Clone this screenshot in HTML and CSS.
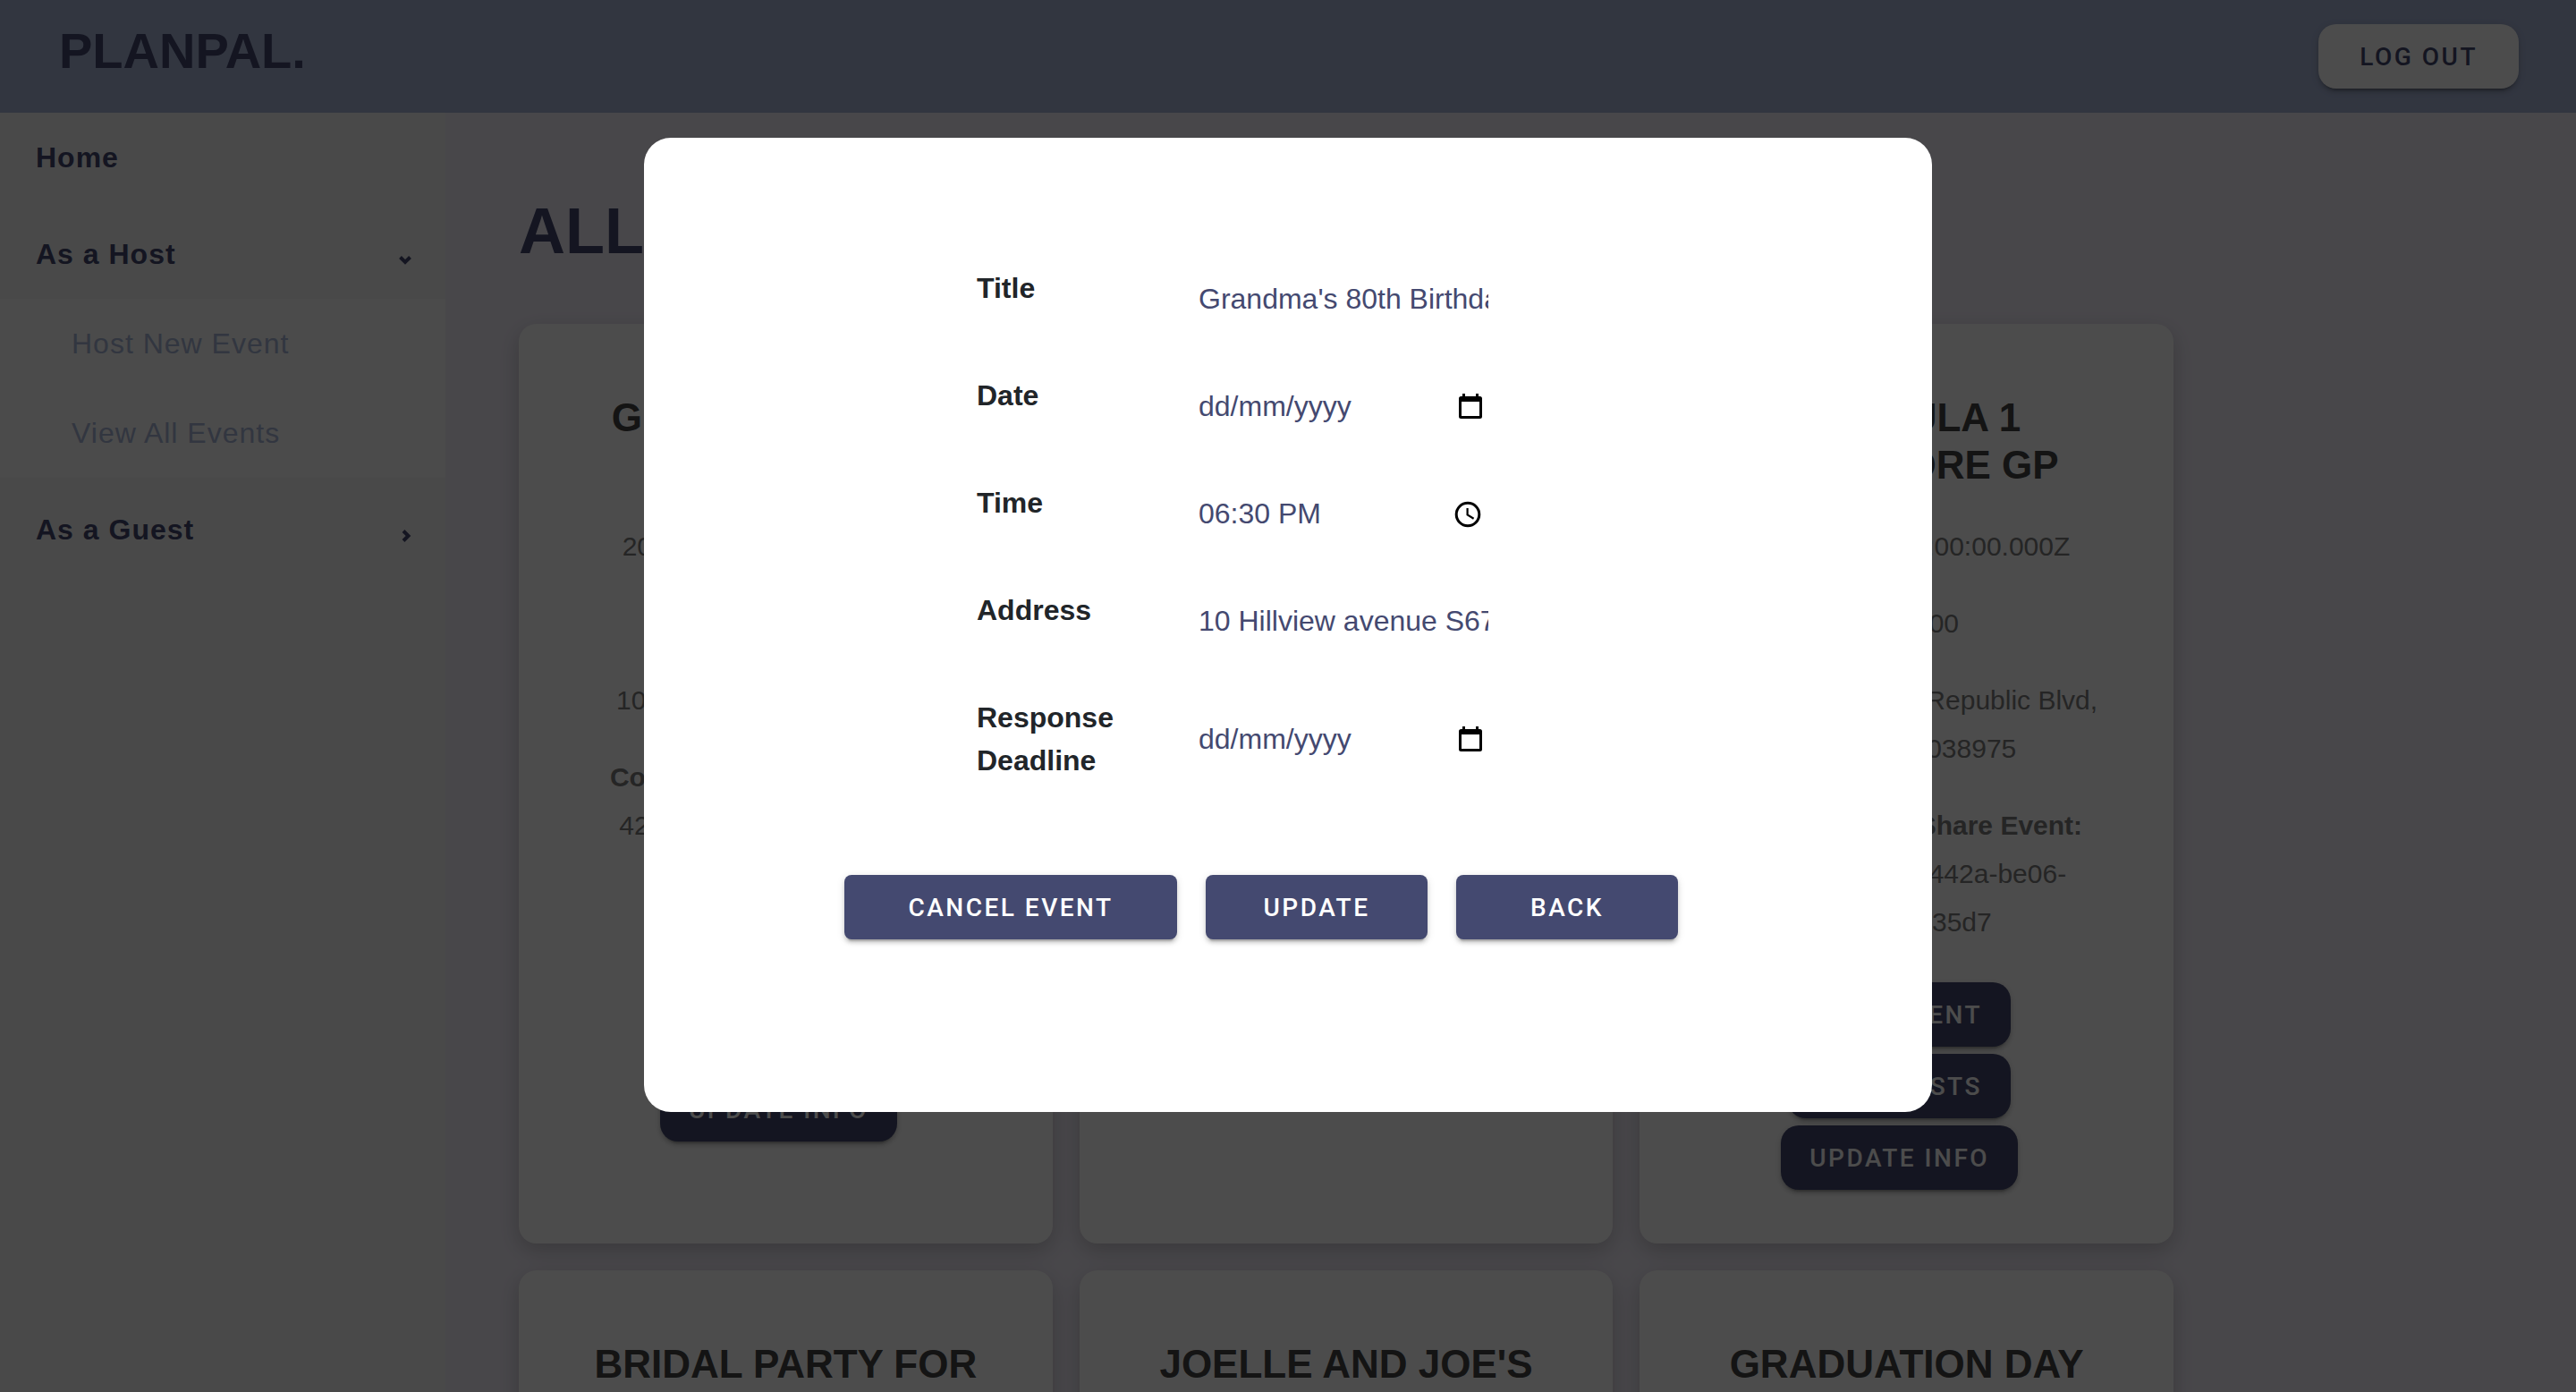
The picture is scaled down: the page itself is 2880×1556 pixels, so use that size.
FILE: index.html
```html
<!DOCTYPE html>
<html lang="en">
<head>
  <meta charset="utf-8">
  <meta name="viewport" content="width=device-width, initial-scale=1">
  <title>PlanPal</title>
  <link rel="stylesheet" href="styles.css">
</head>
<body class="modal-open">
  <header class="topbar">
    <a class="brand" href="#">PLANPAL.</a>
    <button class="btn btn-light" type="button">LOG OUT</button>
  </header>

  <div class="shell">
    <nav class="sidebar" aria-label="Main">
      <a class="nav-item" href="#">Home</a>
      <a class="nav-item" href="#">As a Host
        <svg class="chevron" viewBox="0 0 14 14" aria-hidden="true"><path d="M1.5 3.5 7 9l5.500-5.500"/></svg>
      </a>
      <div class="submenu">
        <a class="sub-item" href="#">Host New Event</a>
        <a class="sub-item" href="#">View All Events</a>
      </div>
      <a class="nav-item" href="#">As a Guest
        <svg class="chevron" viewBox="0 0 14 14" aria-hidden="true"><path d="M5 1.500 10.500 7 5 12.500"/></svg>
      </a>
    </nav>

    <main class="content">
      <h1 class="page-title">ALL EVENTS</h1>
      <div class="cards">
        <article class="card">
          <h2 class="card-title">GRANDMA'S 80TH BIRTHDAY</h2>
          <p class="card-text">2022-04-28T00:00:00.000Z</p>
          <p class="card-text">18:30:00</p>
          <p class="card-text">10 Hillview avenue S670010</p>
          <p class="card-text"><strong>Copy Code To Share Event:</strong><br>42b8a1d0-9c37-4e15-a2d6-<br>7be05c913a46</p>
          <div class="card-actions">
            <button class="btn btn-dark" type="button">VIEW EVENT</button>
            <button class="btn btn-dark" type="button">SEE GUESTS</button>
            <button class="btn btn-dark" type="button">UPDATE INFO</button>
          </div>
        </article>
        <article class="card"></article>
        <article class="card">
          <h2 class="card-title">FORMULA 1 SINGAPORE GP</h2>
          <p class="card-text">2022-10-02T00:00:00.000Z</p>
          <p class="card-text">20:00:00</p>
          <p class="card-text">F1 Pit Building, 1 Republic Blvd, Singapore 038975</p>
          <p class="card-text"><strong>Copy Code To Share Event:</strong><br>6f1d9b20-8fa3-442a-be06-<br>9c1f780e35d7</p>
          <div class="card-actions">
            <button class="btn btn-dark" type="button">VIEW EVENT</button>
            <button class="btn btn-dark" type="button">SEE GUESTS</button>
            <button class="btn btn-dark" type="button">UPDATE INFO</button>
          </div>
        </article>
        <article class="card"><h2 class="card-title">BRIDAL PARTY FOR</h2></article>
        <article class="card"><h2 class="card-title">JOELLE AND JOE'S</h2></article>
        <article class="card"><h2 class="card-title">GRADUATION DAY</h2></article>
      </div>
    </main>
  </div>

  <div class="overlay">
    <div class="modal" role="dialog" aria-modal="true" aria-label="Update event">
      <form class="event-form">
        <div class="fields">
          <div class="field">
            <label class="label" for="title">Title</label>
            <div class="control"><input class="input" id="title" type="text" value="Grandma's 80th Birthday"></div>
          </div>
          <div class="field">
            <label class="label" for="date">Date</label>
            <div class="control">
              <input class="input" id="date" type="text" placeholder="dd/mm/yyyy">
              <button class="picker" type="button" aria-label="Pick a date">
                <svg viewBox="0 0 40 40" aria-hidden="true"><path fill-rule="evenodd" d="M11 6h3v3h12V6h3v3h1.500q2.500 0 2.500 2.500v20q0 2.500-2.500 2.500h-21Q7 34 7 31.500v-20Q7 9 9.500 9H11zM10 15v16h20V15z"/></svg>
              </button>
            </div>
          </div>
          <div class="field">
            <label class="label" for="time">Time</label>
            <div class="control">
              <input class="input" id="time" type="text" value="06:30 PM">
              <button class="picker" type="button" aria-label="Pick a time">
                <svg viewBox="0 0 40 40" aria-hidden="true"><g fill="none" stroke="currentColor"><circle cx="17" cy="21" r="12.800" stroke-width="3"/><path d="M16.600 14v7.500l7 4.200" stroke-width="2.200"/></g></svg>
              </button>
            </div>
          </div>
          <div class="field">
            <label class="label" for="address">Address</label>
            <div class="control"><input class="input" id="address" type="text" value="10 Hillview avenue S670010"></div>
          </div>
          <div class="field">
            <label class="label" for="deadline">Response Deadline</label>
            <div class="control">
              <input class="input" id="deadline" type="text" placeholder="dd/mm/yyyy">
              <button class="picker" type="button" aria-label="Pick a deadline">
                <svg viewBox="0 0 40 40" aria-hidden="true"><path fill-rule="evenodd" d="M11 6h3v3h12V6h3v3h1.500q2.500 0 2.500 2.500v20q0 2.500-2.500 2.500h-21Q7 34 7 31.500v-20Q7 9 9.500 9H11zM10 15v16h20V15z"/></svg>
              </button>
            </div>
          </div>
        </div>
        <div class="form-actions">
          <button class="btn btn-primary btn-wide" type="button">CANCEL EVENT</button>
          <button class="btn btn-primary" type="submit">UPDATE</button>
          <button class="btn btn-primary" type="button">BACK</button>
        </div>
      </form>
    </div>
  </div>
</body>
</html>
```

FILE: styles.css
```css
:root {
  --ink: #444970;
  --sky: #a7b4d6;
  --sans: "Liberation Sans", Arial, sans-serif;
  --btn-shadow: 0 6px 2px -4px rgba(0, 0, 0, .2), 0 4px 4px rgba(0, 0, 0, .14), 0 2px 10px rgba(0, 0, 0, .12);
}

* { box-sizing: border-box; }

body {
  margin: 0;
  min-height: 100vh;
  display: flex;
  flex-direction: column;
  background: #f2eef9;
  font-family: var(--sans);
  font-size: 32px;
  line-height: 48px;
  color: #212529;
}

.modal-open {
  height: 100vh;
  overflow: hidden;
}

/* Top bar */
.topbar {
  flex: none;
  display: flex;
  align-items: center;
  justify-content: space-between;
  height: 126px;
  padding: 0 64px 0 66px;
  background: var(--sky);
}

.brand {
  padding-bottom: 12px;
  font-size: 56px;
  line-height: 64px;
  font-weight: 700;
  color: var(--ink);
  text-decoration: none;
}

.shell {
  flex: none;
  display: flex;
}

/* Sidebar */
.sidebar {
  flex: none;
  width: 498px;
  background: #f5f5f5;
  letter-spacing: 1px;
}

.nav-item,
.sub-item {
  display: flex;
  align-items: center;
  justify-content: space-between;
  height: 100px;
  padding: 0 38px 0 40px;
  text-decoration: none;
}

.nav-item {
  font-weight: 700;
  color: var(--ink);
}

.nav-item + .nav-item,
.submenu + .nav-item { margin-top: 8px; }

.submenu { background: #fcfcfc; }

.sub-item {
  padding-left: 80px;
  color: var(--sky);
}

.chevron {
  width: 14px;
  height: 14px;
  margin-top: 14px;
  fill: none;
  stroke: currentColor;
  stroke-width: 4;
}

/* Event list */
.content {
  flex: 1;
  padding: 92px 82px;
}

.page-title {
  margin: 0 0 64px;
  font-size: 72px;
  line-height: 80px;
  color: var(--ink);
}

.cards {
  display: grid;
  grid-template-columns: repeat(3, 1fr);
  gap: 30px;
  max-width: 1850px;
}

.card {
  padding: 78px 60px 60px;
  border-radius: 20px;
  background: #fff;
  box-shadow: 0 8px 24px rgba(0, 0, 0, .2);
  text-align: center;
}

.card-title {
  margin: 0 0 38px;
  font-size: 44px;
  line-height: 53px;
  color: #444;
}

.card-text {
  margin: 0 -16px 32px;
  font-size: 30px;
  line-height: 54px;
  color: #7c7c7c;
}

.card-actions {
  display: flex;
  flex-direction: column;
  align-items: center;
  gap: 8px;
  padding: 8px 16px 0 0;
}

/* Buttons */
.btn {
  height: 72px;
  padding: 0 32px;
  border: 0;
  border-radius: 20px;
  box-shadow: var(--btn-shadow);
  font-family: Roboto, sans-serif;
  font-size: 28px;
  font-weight: 500;
  letter-spacing: 0.0893em;
  white-space: nowrap;
}

.btn-light {
  padding: 0 46px;
  background: #fff;
  color: var(--ink);
}

.btn-dark {
  background: var(--ink);
  color: #fff;
}

.btn-primary {
  min-width: 248px;
  border-radius: 8px;
  background: var(--ink);
  color: #fff;
}

.btn-wide { min-width: 372px; }

/* Modal */
.overlay {
  position: fixed;
  inset: 0;
  display: flex;
  justify-content: center;
  align-items: flex-start;
  padding-top: 154px;
  background: rgba(0, 0, 0, .7);
}

.modal {
  display: flex;
  justify-content: center;
  width: 50%;
  min-height: 70vh;
  padding: 144px 60px 48px 0;
  border-radius: 30px;
  background: #fff;
}

.fields {
  display: grid;
  gap: 48px;
  padding: 0 148px;
}

.field {
  display: grid;
  grid-template-columns: 168px 324px;
  column-gap: 80px;
}

.label { font-weight: 700; }

.control {
  display: flex;
  align-items: center;
  align-self: center;
  height: 72px;
}

.input {
  flex: 1;
  min-width: 0;
  height: 72px;
  padding: 0;
  border: 0;
  background: transparent;
  font-family: var(--sans);
  font-size: 32px;
  color: var(--ink);
}

.input::placeholder {
  color: var(--ink);
  opacity: 1;
}

.picker {
  width: 40px;
  height: 40px;
  padding: 0;
  border: 0;
  background: none;
  color: #000;
}

.picker svg {
  display: block;
  width: 40px;
  height: 40px;
}

.form-actions {
  display: flex;
  gap: 32px;
  margin-top: 104px;
}
```
